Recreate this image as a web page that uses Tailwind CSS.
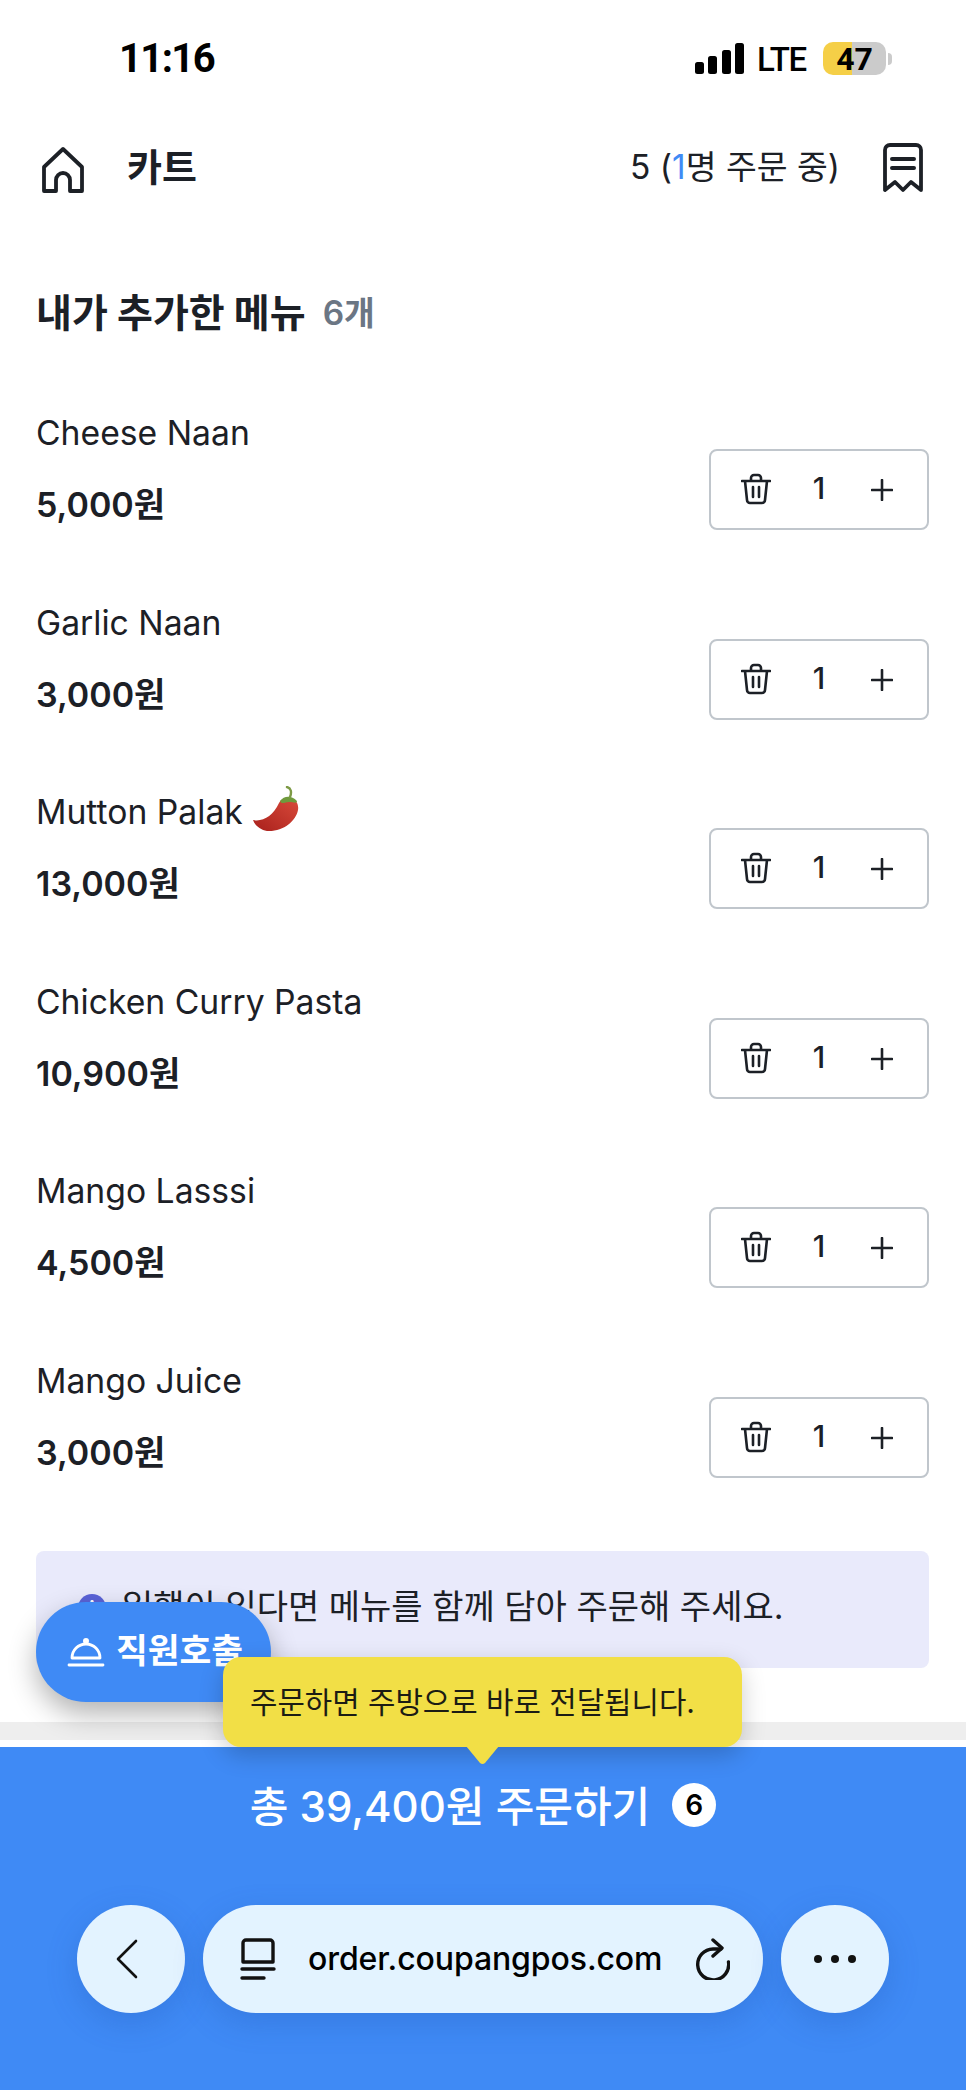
<!DOCTYPE html>
<html lang="ko">
<head>
  <meta charset="UTF-8">
  <meta name="viewport" content="width=device-width, initial-scale=1.0">
  <title>카트</title>
  <script src="https://cdn.jsdelivr.net/npm/@tailwindcss/browser@4"></script>
</head>
<body class="bg-white text-[#1c2026] font-['Inter','Noto_Sans_CJK_KR',sans-serif]">
  <div class="relative w-[966px] h-[2090px] overflow-hidden">

    <!-- status bar -->
    <div class="h-[117px] pt-[36px] pl-[119px] pr-[74px] flex justify-between items-start">
      <div class="text-[40px] leading-[46px] font-bold tracking-[-1.6px] text-black font-['Roboto',sans-serif]">11:16</div>
      <div class="flex items-center gap-[15px] mt-[4px]">
        <svg class="w-[49px] h-[31px] -mr-[2px]" viewBox="0 0 49 31" fill="#000">
          <rect x="0" y="19" width="9" height="12" rx="2.5"/>
          <rect x="13" y="13" width="9" height="18" rx="2.5"/>
          <rect x="27" y="7" width="9" height="24" rx="2.5"/>
          <rect x="40" y="0" width="9" height="31" rx="2.5"/>
        </svg>
        <div class="mt-[3px] text-[33px] leading-[34px] font-medium tracking-[-1.2px] text-black font-['Roboto',sans-serif]">LTE</div>
        <div class="flex items-center ml-[2px]">
          <div class="relative w-[63px] h-[33px] rounded-[10px] bg-[linear-gradient(90deg,#f5cf47_46%,#cbcbcb_46%)] flex items-center justify-center text-[32px] font-bold text-black font-['Roboto',sans-serif]">47</div>
          <div class="w-[4px] h-[12px] ml-[2px] rounded-r-full bg-[#cbcbcb]"></div>
        </div>
      </div>
    </div>

    <!-- header -->
    <header class="h-[100px] pl-[42px] pr-[43px] flex items-center">
      <svg class="w-[42px] h-[46px] mt-[6px]" viewBox="0 0 42 46" fill="none" stroke="#1c2026" stroke-width="3.8" stroke-linejoin="round">
        <path d="M2 20 L21 2 L40 20 V44 H28 V33 a7 7 0 0 0 -14 0 V44 H2 Z"/>
      </svg>
      <div class="ml-[43px] text-[38px] leading-[48px] font-bold">카트</div>
      <div class="ml-auto text-[33.5px] leading-[48px]">5 (<span class="text-[#3f8af5]">1</span>명 주문 중)</div>
      <svg class="w-[40px] h-[50px] ml-[43px] mt-[2px]" viewBox="0 0 40 50" fill="none" stroke="#1c2026" stroke-width="3.8" stroke-linejoin="round">
        <path d="M2 7 a5 5 0 0 1 5 -5 H33 a5 5 0 0 1 5 5 V47 L28 39 L20 47 L12 39 L2 47 Z"/>
        <path d="M9 16 H31 M9 25 H31" stroke-linecap="round" stroke-width="4"/>
      </svg>
    </header>

    <main class="pl-[36px] pr-[37px]">
      <h1 class="mt-[72px] flex items-center h-[48px] text-[39px] font-bold">
        내가 추가한 메뉴
        <span class="ml-[17px] text-[#6b7684] text-[33.5px] font-semibold">6개</span>
      </h1>
      <div id="rows" class="mt-[72px] flex flex-col gap-[69.5px]"></div>

      <div class="mt-[74.5px] h-[117px] rounded-[8px] bg-[#e9eafb] pl-[42px] pt-[32px] flex items-start">
        <div class="w-[28px] h-[28px] mt-[11px] rounded-full bg-[#5a63d8] text-white text-[20px] leading-[28px] text-center font-bold">i</div>
        <div class="ml-[16px] text-[34px] leading-[48px]">일행이 있다면 메뉴를 함께 담아 주문해 주세요.</div>
      </div>
    </main>

    <div class="mt-[54px] h-[18px] bg-[#eeeeee]"></div>
    <div class="h-[7px]"></div>

    <!-- order bar and browser controls -->
    <section class="h-[343px] bg-[#3f8af5] text-white">
      <div class="h-[116px] flex items-center justify-center">
        <div class="mt-[3px] text-[42px] leading-[50px] font-medium">총 39,400원 주문하기</div>
        <div class="ml-[22px] w-[44px] h-[44px] rounded-full bg-white text-black text-[28px] leading-[44px] text-center font-semibold">6</div>
      </div>
      <div class="mt-[42px] flex justify-center gap-[18px] text-black">
        <div class="w-[108px] h-[108px] rounded-full bg-[#e3f3ff] shadow-[0_10px_30px_rgba(30,80,170,0.25)] flex items-center justify-center pr-[8px]">
          <svg class="w-[24px] h-[40px]" viewBox="0 0 24 40" fill="none" stroke="#111" stroke-width="2.6" stroke-linecap="round" stroke-linejoin="round"><path d="M21 2 L3 20 L21 38"/></svg>
        </div>
        <div class="w-[560px] h-[108px] rounded-full bg-[#e3f3ff] shadow-[0_10px_30px_rgba(30,80,170,0.25)] pl-[37px] pr-[33px] flex items-center">
          <svg class="w-[36px] h-[42px] shrink-0" viewBox="0 0 36 42" fill="none" stroke="#111" stroke-width="3.4" stroke-linecap="round" stroke-linejoin="round">
            <path d="M3 24 V5 a3 3 0 0 1 3 -3 H30 a3 3 0 0 1 3 3 V24 Z"/>
            <path d="M2 31 H34 M2 40 H24"/>
          </svg>
          <div class="ml-[32px] text-[32px] leading-[44px] font-medium tracking-[-0.1px]">order.coupangpos.com</div>
          <svg class="ml-auto w-[34px] h-[42px] shrink-0" viewBox="0 0 34 42" fill="none" stroke="#111" stroke-width="3.4" stroke-linecap="round" stroke-linejoin="round">
            <path d="M32.5 24 A15.5 15.5 0 1 1 17 11 H25"/>
            <path d="M17 2 L26 10 L17 18"/>
          </svg>
        </div>
        <div class="w-[108px] h-[108px] rounded-full bg-[#e3f3ff] shadow-[0_10px_30px_rgba(30,80,170,0.25)] flex items-center justify-center gap-[9px]">
          <span class="w-[8px] h-[8px] rounded-full bg-[#111]"></span>
          <span class="w-[8px] h-[8px] rounded-full bg-[#111]"></span>
          <span class="w-[8px] h-[8px] rounded-full bg-[#111]"></span>
        </div>
      </div>
    </section>

    <!-- floating staff call -->
    <button class="absolute left-[36px] top-[1602px] w-[235px] h-[100px] rounded-[50px] bg-[#3f8af5] text-white shadow-[0_12px_28px_rgba(0,0,0,0.3)] pl-[31px] flex items-center">
      <svg class="w-[38px] h-[29px] shrink-0" viewBox="0 0 38 29" fill="none" stroke="#fff" stroke-width="2.8" stroke-linecap="round" stroke-linejoin="round">
        <circle cx="19" cy="3" r="1.6" fill="#fff"/>
        <path d="M5 20 a14 14 0 0 1 28 0 Z M2 27 H36"/>
      </svg>
      <span class="ml-[11px] -mt-[2px] text-[34.5px] leading-[44px] font-bold whitespace-nowrap">직원호출</span>
    </button>

    <!-- tooltip -->
    <div class="absolute left-[223px] top-[1657px] w-[519px] h-[90px] rounded-[18px] bg-[#f2df46] shadow-[0_8px_24px_rgba(0,0,0,0.2)] pl-[27px] flex items-center text-[29.8px] text-[#1c1c14]">
      주문하면 주방으로 바로 전달됩니다.
      <svg class="absolute left-[243px] top-[89px] w-[33px] h-[19px]" viewBox="0 0 33 19" fill="#f2df46"><path d="M0 0 H33 L19 17 Q16.5 19 14 17 Z"/></svg>
    </div>
  </div>

  <script>
    const items = [
      { name: "Cheese Naan", price: "5,000원" },
      { name: "Garlic Naan", price: "3,000원" },
      { name: "Mutton Palak", price: "13,000원", hot: true },
      { name: "Chicken Curry Pasta", price: "10,900원" },
      { name: "Mango Lasssi", price: "4,500원" },
      { name: "Mango Juice", price: "3,000원" }
    ];

    const chili = `
      <svg class="w-[46px] h-[46px] -mt-[6px] ml-[10px]" viewBox="0 0 46 46">
        <defs><linearGradient id="chiliFill" x1="0" y1="1" x2="1" y2="0"><stop offset="0" stop-color="#a8201c"/><stop offset="1" stop-color="#d94a3a"/></linearGradient></defs>
        <path d="M0 34 C10 36 20 30 26 17 C28 13 32 11 37 12 C43 13 46 18 45 24 C43 35 30 46 14 45 C8 44 2 40 0 34 Z" fill="url(#chiliFill)"/>
        <path d="M27 15 C31 10 38 9 44 15 C44 18 40 16 36 16 C32 16 29 19 27 15 Z" fill="#6f9a3c"/>
        <path d="M37 11 C39 6 38 2 34 1" fill="none" stroke="#7d9a45" stroke-width="2.4" stroke-linecap="round"/>
      </svg>`;

    const rows = document.getElementById("rows");
    items.forEach((item) => {
      const row = document.createElement("div");
      row.className = "flex justify-between items-end h-[120px]";
      row.innerHTML = `
        <div class="flex flex-col gap-[24px]">
          <div class="flex items-center h-[48px] text-[33.7px] leading-[48px]">${item.name}${item.hot ? chili : ""}</div>
          <div class="h-[48px] text-[34px] leading-[48px] font-semibold">${item.price}</div>
        </div>
        <div class="w-[220px] h-[81px] -mb-[1px] rounded-[8px] border-2 border-[#c0c6cc] flex items-center relative">
          <svg class="absolute left-[30px] top-[22px] w-[30px] h-[32px]" viewBox="0 0 30 32" fill="none" stroke="#1c2026" stroke-width="2.6" stroke-linecap="round" stroke-linejoin="round">
            <path d="M1 8 H29 M10 8 V5 a3 3 0 0 1 3 -3 H17 a3 3 0 0 1 3 3 V8 M4 8 L6 27 a3 3 0 0 0 3 3 H21 a3 3 0 0 0 3 -3 L26 8 M12 14 V24 M18 14 V24"/>
          </svg>
          <div class="absolute left-[88px] w-[40px] top-[17px] text-center text-[30px] leading-[40px] font-medium">1</div>
          <svg class="absolute left-[160px] top-[28px] w-[22px] h-[22px]" viewBox="0 0 22 22" stroke="#1c2026" stroke-width="2.6" stroke-linecap="round"><path d="M11 1 V21 M1 11 H21"/></svg>
        </div>
      `;
      rows.appendChild(row);
    });
  </script>
</body>
</html>
